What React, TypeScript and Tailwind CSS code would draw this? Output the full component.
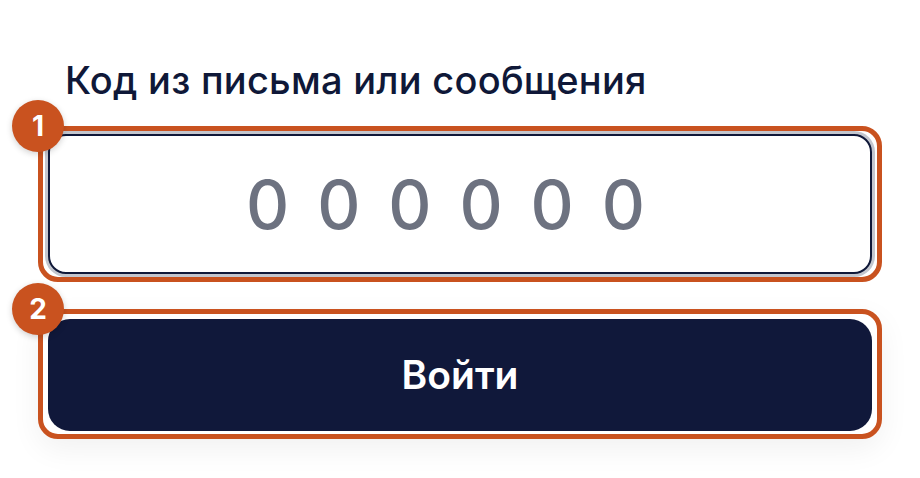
const Badge = ({ n }: { n: number }) => {
  return (
    <div className="absolute -left-[31px] -top-[31px] flex h-[52px] w-[52px] items-center justify-center rounded-full bg-[#c9521f] text-[28px] font-bold text-white shadow-[0_2px_6px_rgba(0,0,0,0.18)]">
      {n}
    </div>
  );
};

export default function App() {
  return (
    <div
      className="flex min-h-[478px] w-[920px] flex-col bg-white px-[38px] pt-[56px]"
      style={{ fontFamily: "Inter, 'Noto Sans', sans-serif" }}
    >
      <p className="ml-[27px] text-[38px] font-medium leading-[48px] tracking-[0.25px] text-[#0f1838]">
        Код из письма или сообщения
      </p>

      <div className="mt-[22px] flex flex-col gap-[27px]">
        <div className="relative rounded-[20px] border-[5px] border-[#c9521f] px-[5px] py-[3px]">
          <Badge n={1} />
          <input
            className="h-[140px] w-full rounded-[18px] border-2 border-[#0f1838] bg-white pr-[24px] text-center text-[67px] font-medium tracking-[5px] shadow-[0_0_0_3px_#c3c6ce] outline-none placeholder:text-[#6d7280]"
            placeholder="0 0 0 0 0 0"
          />
        </div>

        <div className="relative rounded-[20px] border-[5px] border-[#c9521f] px-[5px] pb-[3px] pt-[5px] shadow-[0_10px_30px_rgba(0,0,0,0.06)]">
          <Badge n={2} />
          <button className="h-[112px] w-full rounded-[22px] bg-[#10183a] text-[39px] font-semibold text-white">
            Войти
          </button>
        </div>
      </div>
    </div>
  );
}
